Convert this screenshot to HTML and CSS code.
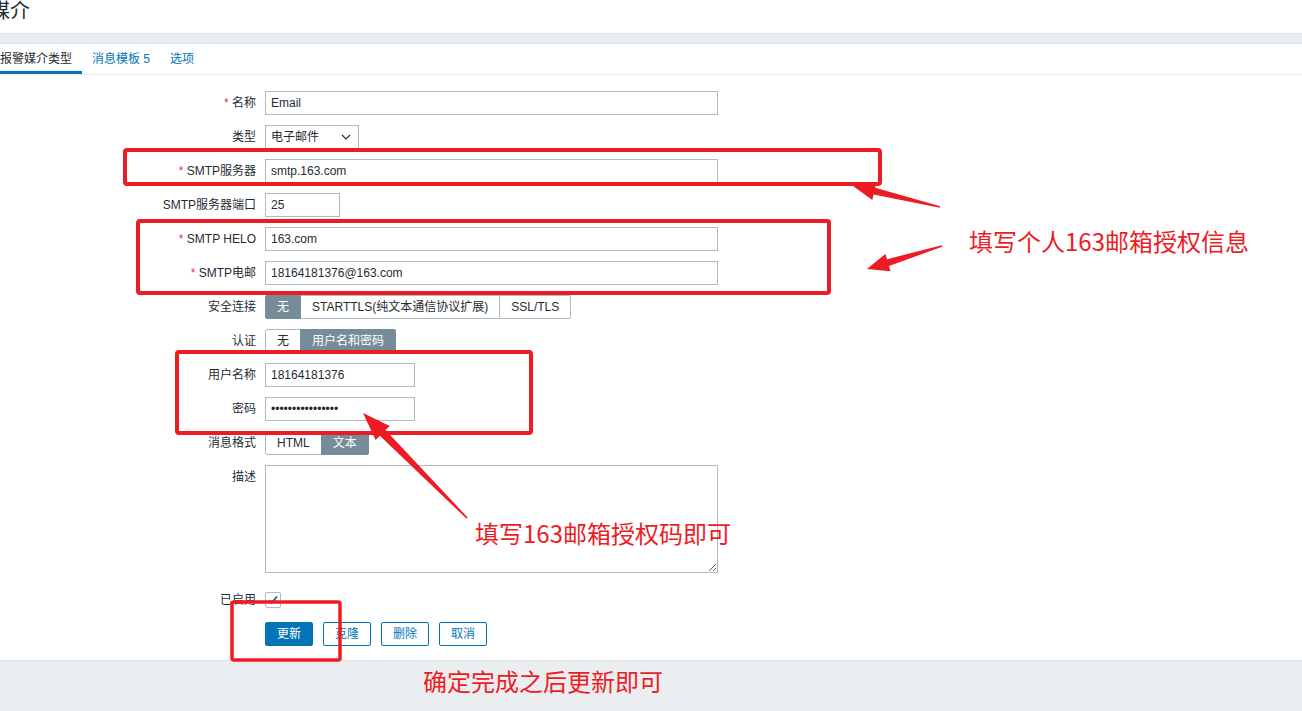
FILE: index.html
```html
<!DOCTYPE html>
<html lang="zh-CN">
<head>
<meta charset="utf-8">
<title>报警媒介类型</title>
<link rel="stylesheet" href="styles.css">
</head>
<body>
<div class="page">
  <header class="header"><h1 class="title">媒介</h1></header>
  <div class="band"></div>
  <nav class="tabs">
    <a class="tab active">报警媒介类型</a>
    <a class="tab">消息模板 5</a>
    <a class="tab">选项</a>
  </nav>
  <form class="form">
    <div class="row"><label class="lbl"><span class="req">*</span> 名称</label><input class="input w-wide" value="Email"></div>
    <div class="row"><label class="lbl">类型</label>
      <div class="select"><span>电子邮件</span><svg class="chev" width="10" height="6" viewBox="0 0 10 6"><path d="M1 1l4 4 4-4" stroke="#1f2c33" stroke-width="1.1" fill="none"/></svg></div>
    </div>
    <div class="row"><label class="lbl"><span class="req">*</span> SMTP服务器</label><input class="input w-wide" value="smtp.163.com"></div>
    <div class="row"><label class="lbl">SMTP服务器端口</label><input class="input w-port" value="25"></div>
    <div class="row"><label class="lbl"><span class="req">*</span> SMTP HELO</label><input class="input w-wide" value="163.com"></div>
    <div class="row"><label class="lbl"><span class="req">*</span> SMTP电邮</label><input class="input w-wide" value="18164181376@163.com"></div>
    <div class="row"><label class="lbl">安全连接</label>
      <div class="seg"><span class="seg-item on">无</span><span class="seg-item">STARTTLS(纯文本通信协议扩展)</span><span class="seg-item">SSL/TLS</span></div>
    </div>
    <div class="row"><label class="lbl">认证</label>
      <div class="seg"><span class="seg-item">无</span><span class="seg-item on">用户名和密码</span></div>
    </div>
    <div class="row row-gap"><label class="lbl">用户名称</label><input class="input w-user" value="18164181376"></div>
    <div class="row"><label class="lbl">密码</label><input class="input w-user" type="password" value="abcdefghijklmnop"></div>
    <div class="row"><label class="lbl">消息格式</label>
      <div class="seg"><span class="seg-item">HTML</span><span class="seg-item on">文本</span></div>
    </div>
    <div class="row row-area"><label class="lbl">描述</label><textarea class="area"></textarea></div>
    <div class="row row-check"><label class="lbl lbl-check">已启用</label>
      <span class="check"><svg width="14" height="14" viewBox="0 0 14 14"><path d="M3 7.5l2.5 2.5L11 3.5" stroke="#0a5f96" stroke-width="1.8" fill="none"/></svg></span>
    </div>
    <div class="actions">
      <button type="button" class="btn primary">更新</button>
      <button type="button" class="btn">克隆</button>
      <button type="button" class="btn">删除</button>
      <button type="button" class="btn">取消</button>
    </div>
  </form>
  <footer class="footer"></footer>
</div>

<div class="overlay">
  <svg class="marks" width="1302" height="711" viewBox="0 0 1302 711">
    <g fill="none" stroke="#ed1c24" stroke-width="4">
      <rect x="125" y="150" width="755" height="34" rx="2"/>
      <rect x="138" y="221" width="691" height="72" rx="2"/>
      <rect x="177" y="352" width="354" height="81" rx="2"/>
      <rect x="232" y="602" width="108" height="58" rx="2" stroke-width="3.5"/>
    </g>
    <g fill="#ed1c24">
      <polygon points="940.2,206.2 875.2,187.8 876.5,182.5 853,186 872.3,199.9 873.6,194.6 939.8,207.8"/>
      <polygon points="942.2,246.8 889.0,265.9 890.6,271.2 867,269 885.4,253.9 887.0,259.2 941.8,245.2"/>
      <polygon points="467.6,517.4 385.5,430.1 389.8,425.9 363,413 375.6,439.9 379.9,435.7 466.4,518.6"/>
    </g>
  </svg>
  <div class="note note-1">填写个人163邮箱授权信息</div>
  <div class="note note-2">填写163邮箱授权码即可</div>
  <div class="note note-3">确定完成之后更新即可</div>
</div>
</body>
</html>
```

FILE: styles.css
```css
html, body {
  margin: 0;
  padding: 0;
}
body {
  position: relative;
  width: 1302px;
  height: 711px;
  overflow: hidden;
  background: #fff;
  color: #1f2c33;
  font-family: "Liberation Sans", Arial, "Noto Sans CJK SC", sans-serif;
  font-size: 12px;
}
.page {
  margin-left: -10px;
}
.header {
  height: 33px;
}
.title {
  margin: 0;
  font-size: 20px;
  font-weight: normal;
  line-height: 22px;
  color: #1f2c33;
}
.band {
  height: 9px;
  background: #ebeef0;
  border-top: 1px solid #dfe4e7;
  border-bottom: 1px solid #dfe4e7;
}
.tabs {
  display: flex;
  height: 30px;
  border-bottom: 1px solid #ebeef0;
}
.tab {
  padding: 3px 10px 0;
  line-height: 24px;
  border-bottom: 3px solid transparent;
  color: #0275b8;
  text-decoration: none;
}
.tab.active {
  color: #1f2c33;
  border-bottom-color: #0275b8;
}
.form {
  padding-top: 16px;
}
.row {
  display: flex;
  align-items: flex-start;
  gap: 9px;
  margin-bottom: 10px;
}
.row-gap {
  margin-top: 1px;
}
.lbl {
  flex: none;
  width: 266px;
  text-align: right;
  line-height: 24px;
}
.req {
  color: #e33734;
}
.input {
  box-sizing: border-box;
  height: 24px;
  margin: 0;
  padding: 0 5px;
  border: 1px solid #acbbc2;
  border-radius: 0;
  background: #fff;
  color: #1f2c33;
  font: inherit;
  outline: none;
}
.w-wide { width: 453px; }
.w-port { width: 75px; }
.w-user { width: 150px; }
.select {
  box-sizing: border-box;
  width: 94px;
  height: 24px;
  padding: 0 7px 0 5px;
  border: 1px solid #acbbc2;
  display: flex;
  align-items: center;
  justify-content: space-between;
  line-height: 22px;
}
.chev {
  display: block;
}
.seg {
  display: flex;
  height: 24px;
}
.seg-item {
  box-sizing: border-box;
  height: 24px;
  padding: 0 11px;
  line-height: 22px;
  border: 1px solid #acbbc2;
  margin-left: -1px;
  background: #fff;
  white-space: nowrap;
}
.seg-item:first-child {
  margin-left: 0;
  border-radius: 2px 0 0 2px;
}
.seg-item:last-child {
  border-radius: 0 2px 2px 0;
}
.seg-item.on {
  position: relative;
  background: #768d99;
  border-color: #768d99;
  color: #fff;
}
.area {
  box-sizing: border-box;
  width: 453px;
  height: 108px;
  margin: 0;
  padding: 4px 5px;
  border: 1px solid #acbbc2;
  border-radius: 0;
  font: inherit;
  outline: none;
}
.row-area {
  margin-bottom: 19px;
}
.row-check {
  margin-bottom: 14px;
  align-items: center;
}
.lbl-check {
  line-height: 16px;
}
.check {
  box-sizing: border-box;
  width: 16px;
  height: 16px;
  border: 1px solid #acbbc2;
  border-radius: 2px;
  display: flex;
  align-items: center;
  justify-content: center;
}
.check svg {
  display: block;
}
.actions {
  display: flex;
  gap: 10px;
  margin-left: 275px;
  margin-bottom: 14px;
}
.btn {
  box-sizing: border-box;
  height: 24px;
  margin: 0;
  padding: 0 11px;
  border: 1px solid #0275b8;
  border-radius: 2px;
  background: #fff;
  color: #0275b8;
  font: inherit;
  line-height: 22px;
}
.btn.primary {
  background: #0275b8;
  color: #fff;
}
.footer {
  height: 50px;
  background: #ebeef0;
  border-top: 1px solid #dfe4e7;
}
.overlay {
  position: absolute;
  left: 0;
  top: 0;
  width: 1302px;
  height: 711px;
  pointer-events: none;
}
.marks {
  position: absolute;
  left: 0;
  top: 0;
}
.note {
  position: absolute;
  color: #ed1c24;
  font-family: "Noto Sans CJK SC", "Noto Sans", sans-serif;
  font-size: 24px;
  line-height: 24px;
  white-space: nowrap;
}
.note-1 { left: 969px; top: 229px; }
.note-2 { left: 475px; top: 521px; }
.note-3 { left: 423px; top: 669px; }
```
